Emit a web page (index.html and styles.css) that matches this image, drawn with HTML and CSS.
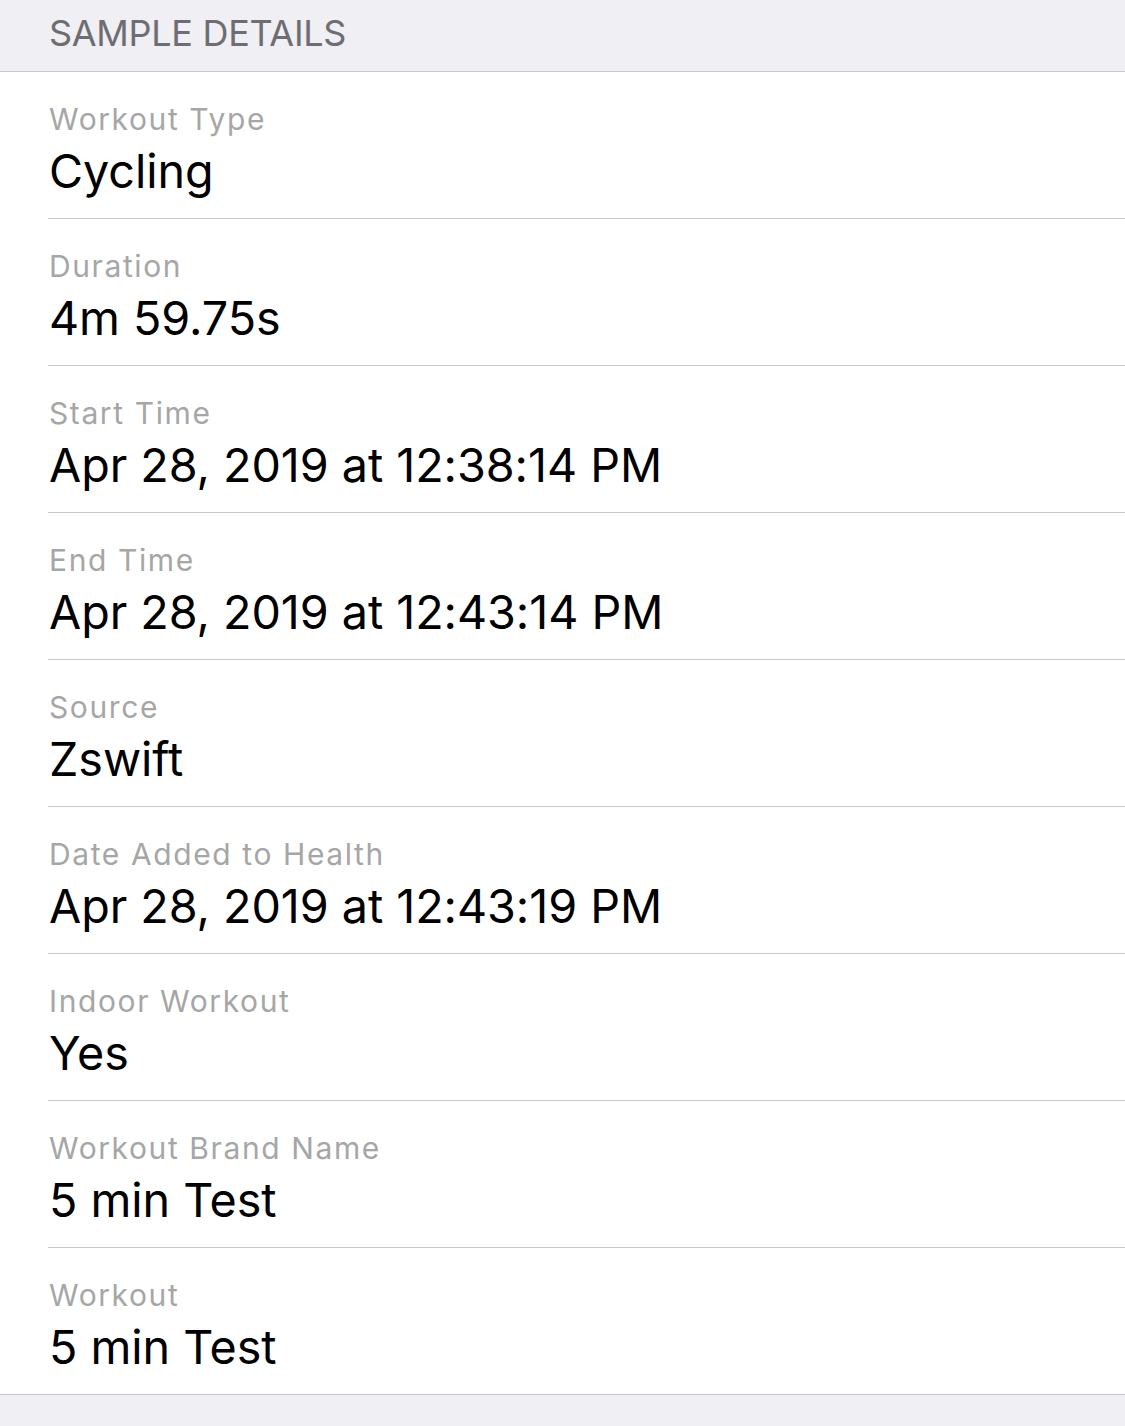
FILE: index.html
```html
<!DOCTYPE html>
<html>
<head>
<meta charset="utf-8">
<link rel="stylesheet" href="styles.css">
</head>
<body>
<div class="header">SAMPLE DETAILS</div>
<div class="list">
  <div class="row"><div class="inner"><div class="label">Workout Type</div><div class="value">Cycling</div></div></div>
  <div class="row"><div class="inner"><div class="label">Duration</div><div class="value">4m 59.75s</div></div></div>
  <div class="row"><div class="inner"><div class="label">Start Time</div><div class="value">Apr 28, 2019 at 12:38:14 PM</div></div></div>
  <div class="row"><div class="inner"><div class="label">End Time</div><div class="value">Apr 28, 2019 at 12:43:14 PM</div></div></div>
  <div class="row"><div class="inner"><div class="label">Source</div><div class="value">Zswift</div></div></div>
  <div class="row"><div class="inner"><div class="label">Date Added to Health</div><div class="value">Apr 28, 2019 at 12:43:19 PM</div></div></div>
  <div class="row"><div class="inner"><div class="label">Indoor Workout</div><div class="value">Yes</div></div></div>
  <div class="row"><div class="inner"><div class="label">Workout Brand Name</div><div class="value">5 min Test</div></div></div>
  <div class="row last"><div class="inner"><div class="label">Workout</div><div class="value">5 min Test</div></div></div>
</div>
</body>
</html>
```
FILE: styles.css
```css
html, body {
  margin: 0;
  padding: 0;
  background: #efeff4;
  font-family: Inter, "Noto Sans", sans-serif;
}
.header {
  height: 72px;
  box-sizing: border-box;
  padding-left: 49px;
  padding-top: 14px;
  font-size: 36px;
  line-height: 38px;
  letter-spacing: -0.3px;
  color: #6d6d72;
  border-bottom: 1px solid #c8c7cc;
}
.list {
  background: #fff;
  border-bottom: 1px solid #c8c7cc;
}
.row {
  padding-left: 48px;
}
.inner {
  height: 147px;
  box-sizing: border-box;
  border-bottom: 1px solid #c8c7cc;
  padding-top: 29px;
  padding-left: 1px;
}
.row.last .inner {
  border-bottom: none;
  height: 146px;
}
.label {
  font-size: 30px;
  line-height: 36px;
  letter-spacing: 1.6px;
  color: #a6a6a6;
}
.value {
  margin-top: 5px;
  font-size: 46.7px;
  line-height: 58px;
  letter-spacing: -0.05px;
  color: #000;
}
```
